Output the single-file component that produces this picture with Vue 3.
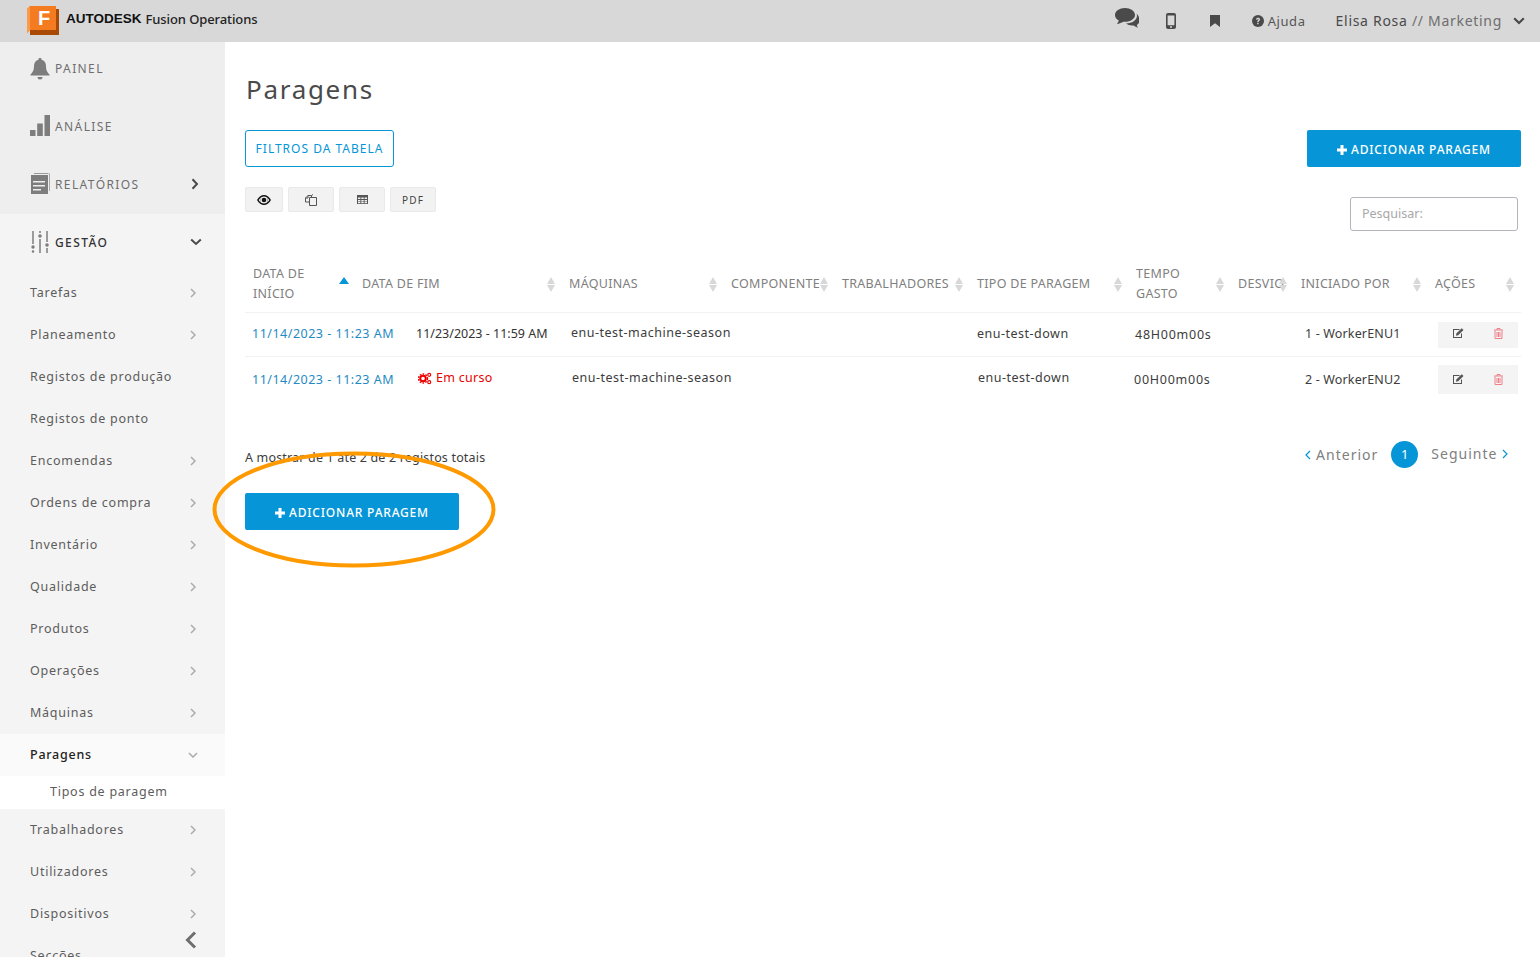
<template>
  <div class="page">
    <header class="topbar">
      <div class="brand">
        <svg class="logo" width="32" height="30" viewBox="0 0 32 30">
          <path d="M3 29h29V3H3z" fill="#a84a05" />
          <path d="M0 3l3-3h26v24H3l-3 3z" fill="#f47b20" />
          <path d="M0 3l3-3v24l-3 3z" fill="#fa9a4a" />
          <text x="17" y="19" class="logo-f">F</text>
        </svg>
        <span class="autodesk">AUTODESK</span>
        <span class="product">Fusion Operations</span>
      </div>
      <div class="top-right">
        <svg class="ic-comments" width="24" height="20" viewBox="0 0 24 20">
          <path d="M10 0C4.500 0 0 3 0 7c0 2.300 1.500 4.300 3.800 5.600C3.500 13.800 2.800 15 2 16c2.500-.4 4.600-1.500 6.200-2.300.6.100 1.200.1 1.800.1 5.500 0 10-3 10-6.800S15.500 0 10 0z" fill="#4a4a4a" />
          <path d="M21.500 5.500c.3.700.5 1.500.5 2.300 0 4.300-4.800 7.600-11 7.800 1.600 1.300 3.700 2 6 2 .6 0 1.100 0 1.700-.1 1.100.9 2.600 1.800 4.300 2.300-.5-.9-1-1.900-1.200-2.900 1.700-1 2.700-2.500 2.700-4.200 0-3-1-5.300-3-7.200z" fill="#4a4a4a" />
        </svg>
        <svg class="ic-mobile" width="10" height="16" viewBox="0 0 10 16">
          <path d="M2 0h6a2 2 0 012 2v12a2 2 0 01-2 2H2a2 2 0 01-2-2V2a2 2 0 012-2zm-.4 2.500v9.700h6.800V2.500zM5 13a1 1 0 100 2 1 1 0 000-2z" fill="#4a4a4a" fill-rule="evenodd" />
        </svg>
        <svg class="ic-bookmark" width="10" height="12" viewBox="0 0 10 12">
          <path d="M0 0h10v12L5 8.300 0 12z" fill="#4a4a4a" />
        </svg>
        <div class="help">
          <svg width="12" height="12" viewBox="0 0 12 12">
            <circle cx="6" cy="6" r="6" fill="#4a4a4a" />
            <path d="M4 4.600C4 3.400 5 2.800 6 2.800s2.100.6 2.100 1.700c0 1.500-1.500 1.300-1.500 2.500H5.200c0-1.900 1.400-1.700 1.400-2.500 0-.7-1.200-.7-1.300.2zM5.200 7.800h1.400v1.400H5.200z" fill="#d8d8d8" />
          </svg>
          <span>Ajuda</span>
        </div>
        <span class="user">Elisa Rosa <span class="user-role">// Marketing</span></span>
        <svg class="user-chev" width="12" height="8" viewBox="0 0 12 8">
          <path d="M1.200 1.200L6 6l4.800-4.800" fill="none" stroke="#4a4a4a" stroke-width="2.200" />
        </svg>
      </div>
    </header>

    <div class="body">
      <aside class="sidebar">
        <div class="top-nav">
          <div class="top-item first">
            <svg width="20" height="22" viewBox="0 0 20 22">
              <path d="M10 0a1.500 1.500 0 011.500 1.800C14.500 2.500 16 5 16 8c0 4.500 1.500 6.500 3.500 8.500v1H.5v-1C2.500 14.500 4 12.500 4 8c0-3 1.500-5.500 4.500-6.200A1.500 1.500 0 0110 0z" fill="#7d7d7d" />
              <path d="M7.500 19h5a2.500 2.500 0 01-5 0z" fill="#7d7d7d" />
            </svg>
            <span>PAINEL</span>
          </div>
          <div class="top-item">
            <svg width="20" height="22" viewBox="0 0 20 22">
              <path d="M0 15h5.500v6H0zM7.200 8.500h5.600V21H7.200zM14.500 0H20v21h-5.500z" fill="#7d7d7d" />
            </svg>
            <span>ANÁLISE</span>
          </div>
          <div class="top-item">
            <svg width="20" height="22" viewBox="0 0 20 22">
              <path d="M4 0h14.500v1H4zM19 .5h.8V18H19z" fill="#9a9a9a" />
              <path d="M1 2h17v19H1z" fill="#7d7d7d" />
              <path d="M3 8h12v1.500H3zM3 12h12v1.500H3zM3 16h8v1.500H3z" fill="#eee" />
            </svg>
            <span>RELATÓRIOS</span>
            <svg class="chev-dark" width="8" height="12" viewBox="0 0 8 12">
              <path d="M1.500 1.200L6 6l-4.500 4.800" fill="none" stroke="#4a4a4a" stroke-width="2" />
            </svg>
          </div>
        </div>
        <div class="top-item gestao">
          <svg width="20" height="22" viewBox="0 0 20 22">
            <path d="M3 0v13M10 8v14M17 0v11M17 17v5" stroke="#7d7d7d" stroke-width="1.500" fill="none" />
            <circle cx="3" cy="16" r="1.700" fill="#7d7d7d" />
            <circle cx="3" cy="20.500" r="1.200" fill="#7d7d7d" />
            <circle cx="10" cy="1" r="1" fill="#7d7d7d" />
            <circle cx="10" cy="5" r="1.800" fill="#7d7d7d" />
            <circle cx="17" cy="14" r="1.800" fill="#7d7d7d" />
          </svg>
          <span>GESTÃO</span>
          <svg class="chev-dark" width="12" height="8" viewBox="0 0 12 8">
            <path d="M1.200 1.500L6 6l4.800-4.500" fill="none" stroke="#4a4a4a" stroke-width="2" />
          </svg>
        </div>
        <div v-for="item in navItems" :key="item.label" class="nav-item" :class="{ open: item.open }">
          <span>{{ item.label }}</span>
          <svg v-if="item.arrow" class="chev" width="6" height="10" viewBox="0 0 6 10">
            <path d="M1 1l4 4-4 4" fill="none" stroke="#ababab" stroke-width="1.500" />
          </svg>
          <svg v-if="item.open" class="chev-open" width="10" height="6" viewBox="0 0 10 6">
            <path d="M1 1l4 4 4-4" fill="none" stroke="#ababab" stroke-width="1.500" />
          </svg>
        </div>
        <svg class="collapse" width="12" height="18" viewBox="0 0 12 18">
          <path d="M10 1.500L2.500 9l7.500 7.500" fill="none" stroke="#6e6e6e" stroke-width="3" />
        </svg>
      </aside>

      <main class="main">
        <h1 class="title">Paragens</h1>
        <div class="toolbar">
          <button class="btn-outline">FILTROS DA TABELA</button>
          <button class="btn-add">
            <svg width="10" height="10" viewBox="0 0 10 10"><path d="M3.500 0h3v3.500H10v3H6.500V10h-3V6.500H0v-3h3.500z" fill="#fff" /></svg>
            ADICIONAR PARAGEM
          </button>
        </div>
        <div class="tools-row">
          <div class="exports">
            <button class="exp w38">
              <svg width="14" height="10" viewBox="0 0 14 10">
                <path d="M0 5c2-3.300 4.300-5 7-5s5 1.700 7 5c-2 3.300-4.300 5-7 5S2 8.300 0 5zm7-3.500a3.500 3.500 0 100 7 3.500 3.500 0 000-7zM1.700 5C2.800 6.700 4 7.800 5 8.300 3.400 7 3.400 3 5 1.700 4 2.200 2.800 3.300 1.700 5zm10.600 0C11.200 3.300 10 2.200 9 1.700c1.600 1.300 1.600 5.300 0 6.600 1-.5 2.200-1.600 3.300-3.300z" fill="#111" fill-rule="evenodd" />
                <circle cx="7" cy="5" r="2.300" fill="#111" />
              </svg>
            </button>
            <button class="exp w46">
              <svg width="12" height="12" viewBox="0 0 12 12">
                <path d="M4.500 3.500h7v8h-7zM.5 4L3 1.500h3.500v2M3 1.500V4H.5v4h4M6.500 1.500L8 .5" fill="none" stroke="#555" stroke-width="1" />
              </svg>
            </button>
            <button class="exp w46">
              <svg width="11" height="9" viewBox="0 0 11 9">
                <path d="M0 0h11v9H0z" fill="#555" />
                <path d="M1 2.500h2.400v1.500H1zM4.300 2.500h2.400v1.500H4.300zM7.600 2.500H10v1.500H7.600zM1 5h2.400v1.500H1zM4.300 5h2.400v1.500H4.300zM7.600 5H10v1.500H7.600zM1 7h2.400v1.200H1zM4.300 7h2.400v1.200H4.300zM7.600 7H10v1.200H7.600z" fill="#f2f2f2" />
              </svg>
            </button>
            <button class="exp w46 pdf">PDF</button>
          </div>
          <div class="search">Pesquisar:</div>
        </div>

        <div class="thead">
          <div v-for="col in columns" :key="col.label" class="th" :style="{ width: col.width + 'px' }">
            <span class="th-label">{{ col.label }}</span>
            <span v-if="col.active" class="sort-active"></span>
            <span v-else class="sort"><i class="up"></i><i class="down"></i></span>
          </div>
        </div>

        <div v-for="row in rows" :key="row.id" class="row" :class="row.cls">
          <div class="c-start">{{ row.start }}</div>
          <div class="c-end">
            <span v-if="row.running" class="running">
              <svg width="14" height="13" viewBox="0 0 14 13">
                <circle cx="5" cy="6.500" r="2.800" fill="none" stroke="#e00" stroke-width="2" />
                <circle cx="5" cy="6.500" r="4.500" fill="none" stroke="#e00" stroke-width="1.400" stroke-dasharray="1.600 1.300" />
                <circle cx="11.200" cy="2.800" r="1.500" fill="none" stroke="#e00" stroke-width="1.200" />
                <circle cx="11.200" cy="10.200" r="1.500" fill="none" stroke="#e00" stroke-width="1.200" />
              </svg>
              Em curso
            </span>
            <template v-else>{{ row.end }}</template>
          </div>
          <div class="c-machine">{{ row.machine }}</div>
          <div class="c-type">{{ row.type }}</div>
          <div class="c-time">{{ row.time }}</div>
          <div class="c-worker">{{ row.worker }}</div>
          <div class="c-actions">
            <svg width="12" height="10" viewBox="0 0 12 10">
              <path d="M1.500 1h6.500L7 2H2v7h7V6l1-1v5H1V1z" fill="#555" />
              <path d="M4.300 5.500L9.700.2l1.800 1.800-5.300 5.300-2.200.4z" fill="#555" />
            </svg>
            <svg width="9" height="11" viewBox="0 0 9 11">
              <path d="M0 2h9M3 2V.5h3V2M1 2.500V10.500h7V2.500M3 4v5M4.500 4v5M6 4v5" fill="none" stroke="#ee8088" stroke-width="1" />
            </svg>
          </div>
        </div>

        <div class="footer-row">
          <span class="info">A mostrar de 1 até 2 de 2 registos totais</span>
          <div class="pager">
            <span class="page-link">
              <svg width="6" height="10" viewBox="0 0 6 10"><path d="M5 1L1 5l4 4" fill="none" stroke="#0696d7" stroke-width="1.200" /></svg>
              Anterior
            </span>
            <span class="page-num">1</span>
            <span class="page-link next">
              Seguinte
              <svg width="6" height="10" viewBox="0 0 6 10"><path d="M1 1l4 4-4 4" fill="none" stroke="#0696d7" stroke-width="1.200" /></svg>
            </span>
          </div>
        </div>
        <button class="btn-add btn-bottom">
          <svg width="10" height="10" viewBox="0 0 10 10"><path d="M3.500 0h3v3.500H10v3H6.500V10h-3V6.500H0v-3h3.500z" fill="#fff" /></svg>
          ADICIONAR PARAGEM
        </button>

        <svg class="ring" width="286" height="119" viewBox="0 0 286 119">
          <ellipse cx="143" cy="59.500" rx="139.500" ry="56" fill="none" stroke="#f90" stroke-width="4" />
        </svg>
      </main>
    </div>
  </div>
</template>

<script setup>
const navItems = [
  { label: 'Tarefas', arrow: true },
  { label: 'Planeamento', arrow: true },
  { label: 'Registos de produção' },
  { label: 'Registos de ponto' },
  { label: 'Encomendas', arrow: true },
  { label: 'Ordens de compra', arrow: true },
  { label: 'Inventário', arrow: true },
  { label: 'Qualidade', arrow: true },
  { label: 'Produtos', arrow: true },
  { label: 'Operações', arrow: true },
  { label: 'Máquinas', arrow: true },
  { label: 'Paragens', open: true },
  { label: 'Tipos de paragem' },
  { label: 'Trabalhadores', arrow: true },
  { label: 'Utilizadores', arrow: true },
  { label: 'Dispositivos', arrow: true },
  { label: 'Secções' },
]

const columns = [
  { label: 'DATA DE INÍCIO', width: 109, active: true },
  { label: 'DATA DE FIM', width: 207 },
  { label: 'MÁQUINAS', width: 162 },
  { label: 'COMPONENTE', width: 111 },
  { label: 'TRABALHADORES', width: 135 },
  { label: 'TIPO DE PARAGEM', width: 159 },
  { label: 'TEMPO GASTO', width: 102 },
  { label: 'DESVIO', width: 63 },
  { label: 'INICIADO POR', width: 134 },
  { label: 'AÇÕES', width: 93 },
]

const rows = [
  {
    id: 1,
    cls: 'row-a',
    start: '11/14/2023 - 11:23 AM',
    end: '11/23/2023 - 11:59 AM',
    machine: 'enu-test-machine-season',
    type: 'enu-test-down',
    time: '48H00m00s',
    worker: '1 - WorkerENU1',
  },
  {
    id: 2,
    cls: 'row-b',
    start: '11/14/2023 - 11:23 AM',
    running: true,
    machine: 'enu-test-machine-season',
    type: 'enu-test-down',
    time: '00H00m00s',
    worker: '2 - WorkerENU2',
  },
]
</script>

<style>
html,
body {
  margin: 0;
  height: 100%;
  overflow: hidden;
  background: #fff;
}
</style>

<style scoped>
.page {
  width: 1540px;
  height: 957px;
  overflow: hidden;
  font-family: "Noto Sans", "Liberation Sans", sans-serif;
  font-size: 13px;
  color: #3c3c3c;
}

.topbar {
  height: 42px;
  background: #d8d8d8;
  display: flex;
  align-items: center;
  justify-content: space-between;
  padding: 0 15px 0 27px;
}

.brand {
  display: flex;
  align-items: center;
}

.logo {
  margin: 0 7px 0 0;
}

.logo-f {
  font-family: "Liberation Sans", sans-serif;
  font-size: 20px;
  font-weight: 700;
  fill: #fff;
  text-anchor: middle;
}

.autodesk {
  font-family: "Liberation Sans", sans-serif;
  font-weight: 700;
  font-size: 13.500px;
  color: #111;
  margin: 0 4px 5px 0;
}

.product {
  font-size: 13px;
  font-weight: 500;
  color: #222;
  letter-spacing: -0.1px;
  margin-bottom: 5px;
}

.top-right {
  display: flex;
  align-items: center;
}

.ic-comments {
  margin-right: 27px;
  margin-bottom: 6px;
}

.ic-mobile {
  margin-right: 34px;
}

.ic-bookmark {
  margin-right: 32px;
}

.help {
  display: flex;
  align-items: center;
  gap: 4px;
  margin-right: 30px;
  font-size: 13px;
  letter-spacing: 0.6px;
  color: #555;
}

.user {
  font-size: 14px;
  letter-spacing: 0.7px;
  color: #4a4a4a;
  padding-bottom: 1px;
}

.user-role {
  color: #6e6e6e;
}

.user-chev {
  margin-left: 11px;
}

.body {
  display: flex;
  height: 915px;
}

.sidebar {
  position: relative;
  width: 225px;
  flex-shrink: 0;
  background: #f4f4f4;
  overflow: hidden;
}

.top-nav {
  background: #eeeeee;
}

.top-item {
  box-sizing: border-box;
  height: 58px;
  display: flex;
  align-items: center;
  padding: 0 26px 2px 30px;
  font-size: 12px;
  letter-spacing: 1.400px;
  color: #6e6e6e;
}

.top-item.first {
  height: 56px;
  padding: 16px 26px 0 30px;
  align-items: flex-start;
}

.top-item.first span {
  padding-top: 2px;
}

.top-item svg:first-child {
  margin-right: 5px;
}

.top-item .chev-dark {
  margin-left: auto;
}

.gestao {
  color: #333;
  font-weight: 500;
  padding-right: 23px;
}

.nav-item {
  box-sizing: border-box;
  height: 42px;
  display: flex;
  align-items: center;
  justify-content: space-between;
  padding: 0 29px 1px 30px;
  font-size: 12.500px;
  letter-spacing: 0.750px;
  color: #5c5c5c;
}

.nav-item.open {
  background: #fafafa;
  color: #222;
  font-weight: 500;
}

.nav-item.open + .nav-item {
  height: 33px;
  background: #fff;
  padding: 0 29px 3px 50px;
}

.chev-open {
  margin-right: -2px;
}

.collapse {
  position: absolute;
  left: 185px;
  top: 889px;
}

.main {
  position: relative;
  flex: 1;
  padding: 27px 19px 0 20px;
}

.title {
  margin: 0 0 0 1px;
  height: 41px;
  line-height: 40px;
  font-size: 26px;
  font-weight: 400;
  letter-spacing: 1.700px;
  color: #4a4a4a;
}

.toolbar {
  margin-top: 20px;
  display: flex;
  justify-content: space-between;
}

button {
  font-family: inherit;
  cursor: pointer;
}

.btn-outline {
  width: 149px;
  height: 37px;
  padding: 0;
  background: #fff;
  border: 1px solid #0696d7;
  border-radius: 3px;
  color: #0696d7;
  font-size: 12px;
  letter-spacing: 1px;
}

.btn-add {
  display: flex;
  align-items: center;
  justify-content: center;
  gap: 4px;
  width: 214px;
  height: 37px;
  padding: 2px 0 0;
  border: 0;
  border-radius: 2px;
  background: #0696d7;
  color: #fff;
  font-size: 12px;
  font-weight: 500;
  letter-spacing: 0.800px;
}

.tools-row {
  margin-top: 20px;
  height: 44px;
  display: flex;
  justify-content: space-between;
}

.exports {
  display: flex;
  gap: 5px;
  height: 25px;
}

.exp {
  height: 25px;
  padding: 0;
  background: #f2f2f2;
  border: 1px solid #e9e9e9;
  border-radius: 2px;
  display: flex;
  align-items: center;
  justify-content: center;
}

.w38 {
  width: 38px;
}

.w46 {
  width: 46px;
}

.pdf {
  font-size: 10px;
  letter-spacing: 1.200px;
  color: #444;
}

.search {
  box-sizing: border-box;
  width: 168px;
  height: 34px;
  margin: 10px 3px 0 0;
  padding-left: 11px;
  line-height: 32px;
  border: 1px solid #b4b4bc;
  border-radius: 3px;
  font-size: 12.500px;
  color: #a8a8a8;
}

.thead {
  margin-top: 31px;
  display: flex;
  height: 50px;
  border-bottom: 1px solid #f2f2f2;
}

.th {
  position: relative;
  box-sizing: border-box;
  padding: 0 8px 6px;
  display: flex;
  align-items: center;
  font-size: 12.500px;
  line-height: 20px;
  letter-spacing: 0.300px;
  color: #808080;
}

.th:first-child .th-label,
.th:nth-child(7) .th-label {
  width: 70px;
}

.sort {
  position: absolute;
  top: 15px;
  right: 6px;
  display: flex;
  flex-direction: column;
  gap: 1px;
}

.sort i {
  display: block;
  width: 0;
  height: 0;
  border-left: 4px solid transparent;
  border-right: 4px solid transparent;
}

.sort .up {
  border-bottom: 7px solid #d8d8d8;
}

.sort .down {
  border-top: 7px solid #d8d8d8;
}

.sort-active {
  position: absolute;
  top: 15px;
  right: 5px;
  border-left: 5px solid transparent;
  border-right: 5px solid transparent;
  border-bottom: 7px solid #0696d7;
}

.row {
  display: grid;
  grid-template-columns: 164px 155px 406px 158px 170px 133px 80px;
  padding-left: 7px;
  height: 43px;
  border-bottom: 1px solid #f2f2f2;
  color: #3c3c3c;
  font-size: 12.500px;
  letter-spacing: 0.500px;
  line-height: 20px;
}

.row-a > div {
  padding-top: 11px;
}

.row-a .c-end {
  letter-spacing: 0;
}

.row-a .c-machine {
  padding-top: 10px;
}

.row-a .c-time {
  padding-top: 12px;
}

.row-a .c-actions {
  padding-top: 0;
  margin-top: 9px;
  height: 26px;
}

.row-b {
  border-bottom: 0;
}

.row-b > div {
  padding-top: 13px;
}

.row-b .c-machine,
.row-b .c-type {
  padding-top: 11px;
  margin-left: 1px;
}

.row-b .c-end {
  padding-top: 11px;
  padding-left: 2px;
}

.row-b .c-time {
  margin-left: -1px;
}

.row-b .c-actions {
  padding-top: 0;
  margin-top: 8px;
  height: 29px;
}

.c-start {
  color: #1f8ac4;
}

.c-end {
  color: #333;
}

.c-time {
  letter-spacing: 0.750px;
}

.c-worker {
  letter-spacing: 0.150px;
}

.running {
  display: inline-flex;
  align-items: center;
  gap: 4px;
  color: #e60000;
  letter-spacing: 0.300px;
}

.c-actions {
  display: flex;
  align-items: center;
  justify-content: space-between;
  padding: 0 15px 0 14px;
  background: #f4f4f4;
  box-sizing: border-box;
}

.c-actions svg {
  margin-bottom: 4px;
}

.row-b .c-actions svg {
  margin-bottom: 1px;
}

.footer-row {
  margin-top: 41px;
  display: flex;
  justify-content: space-between;
  align-items: center;
  height: 27px;
}

.info {
  font-size: 12.500px;
  letter-spacing: 0.170px;
  color: #3c3c3c;
  padding-top: 5px;
}

.pager {
  display: flex;
  align-items: center;
  padding-right: 13px;
  letter-spacing: 1px;
  font-size: 14px;
  color: #808080;
}

.page-num {
  width: 27px;
  height: 27px;
  margin: 0 13px 0 13px;
  border-radius: 50%;
  background: #0696d7;
  color: #fff;
  font-size: 13px;
  letter-spacing: 0;
  text-align: center;
  line-height: 27px;
}

.next {
  margin-top: -2px;
}

.btn-bottom {
  margin-top: 25px;
}

.ring {
  position: absolute;
  left: -14px;
  top: 408px;
  pointer-events: none;
}
</style>
